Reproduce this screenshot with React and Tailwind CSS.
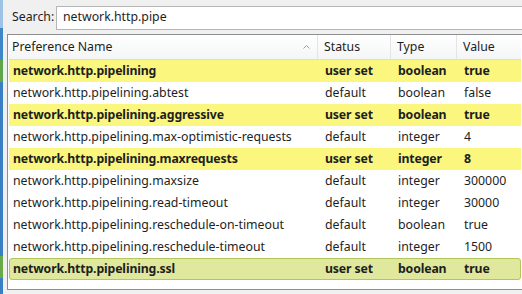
import React from 'react'

const rows = [
  ['network.http.pipelining', 'user set', 'boolean', 'true', 'y'],
  ['network.http.pipelining.abtest', 'default', 'boolean', 'false'],
  ['network.http.pipelining.aggressive', 'user set', 'boolean', 'true', 'y'],
  ['network.http.pipelining.max-optimistic-requests', 'default', 'integer', '4'],
  ['network.http.pipelining.maxrequests', 'user set', 'integer', '8', 'y'],
  ['network.http.pipelining.maxsize', 'default', 'integer', '300000'],
  ['network.http.pipelining.read-timeout', 'default', 'integer', '30000'],
  ['network.http.pipelining.reschedule-on-timeout', 'default', 'boolean', 'true'],
  ['network.http.pipelining.reschedule-timeout', 'default', 'integer', '1500'],
  ['network.http.pipelining.ssl', 'user set', 'boolean', 'true', 's'],
]

function Row({ r }) {
  const bold = r[4] ? 'font-bold tracking-[-0.15px]' : ''
  let bg = 'bg-white border border-transparent'
  if (r[4] === 'y') bg = 'bg-[#fbf77e] border border-transparent'
  if (r[4] === 's') bg = 'bg-[#dfe89c] border border-[#b3c65a] rounded-[3px]'
  return (
    <div className={`flex h-[22px] items-center text-[#1e1e1e] ${bold} ${bg}`}>
      <div className="w-[309px] pl-[3px] truncate">{r[0]}</div>
      <div className="w-[73px] pl-[6px]">{r[1]}</div>
      <div className="w-[66px] pl-[6px]">{r[2]}</div>
      <div className="flex-1 pl-[6px]">{r[3]}</div>
    </div>
  )
}

export default function App() {
  return (
    <div className="w-[522px] h-[294px] flex bg-[#f0f0f0] overflow-hidden text-[12.3px]" style={{ fontFamily: '"Noto Sans", "Open Sans", sans-serif' }}>
      <div className="w-[3px] flex flex-col">
        <div className="h-[28px] bg-[#9cc3e6]" />
        <div className="h-[32px] bg-[#3f86c9]" />
        <div className="h-[22px] bg-[#5fa64a]" />
        <div className="flex-1 bg-[#3a7fc4]" />
        <div className="h-[22px] bg-[#6aa947]" />
        <div className="h-[16px] bg-[#3a7fc4]" />
      </div>
      <div className="flex-1 flex flex-col pl-[3px]">
        <div className="flex items-center h-[34px] pt-[1px]">
          <span className="w-[50px] pl-[6px] text-[#1e1e1e]">Search:</span>
          <div className="flex-1 h-[24px] bg-white border border-[#b5b5b5] border-r-0 flex items-center pl-[6px] text-[#1e1e1e]">network.http.pipe</div>
        </div>
        <div className="flex flex-col h-[256px] border border-[#8e8f8f] border-r-0 bg-white ml-[1px] px-[1px]">
          <div className="flex h-[25px] shrink-0 items-center text-[#1e1e1e] bg-gradient-to-b from-white to-[#f4f5f6] border-b border-[#dcdcdc]">
            <div className="w-[309px] pl-[3px] flex items-center justify-between border-r border-[#e4e4e4] h-full pr-[7px]">
              <span>Preference Name</span>
              <svg width="7" height="4" viewBox="0 0 7 4"><path d="M0.5 3.5 L3.5 0.5 L6.5 3.5" fill="none" stroke="#9aa0a6" strokeWidth="1" /></svg>
            </div>
            <div className="w-[73px] pl-[6px] border-r border-[#e4e4e4] h-full flex items-center">Status</div>
            <div className="w-[66px] pl-[6px] border-r border-[#e4e4e4] h-full flex items-center">Type</div>
            <div className="flex-1 pl-[6px]">Value</div>
          </div>
          {rows.map(r => <Row key={r[0]} r={r} />)}
        </div>
      </div>
    </div>
  )
}
